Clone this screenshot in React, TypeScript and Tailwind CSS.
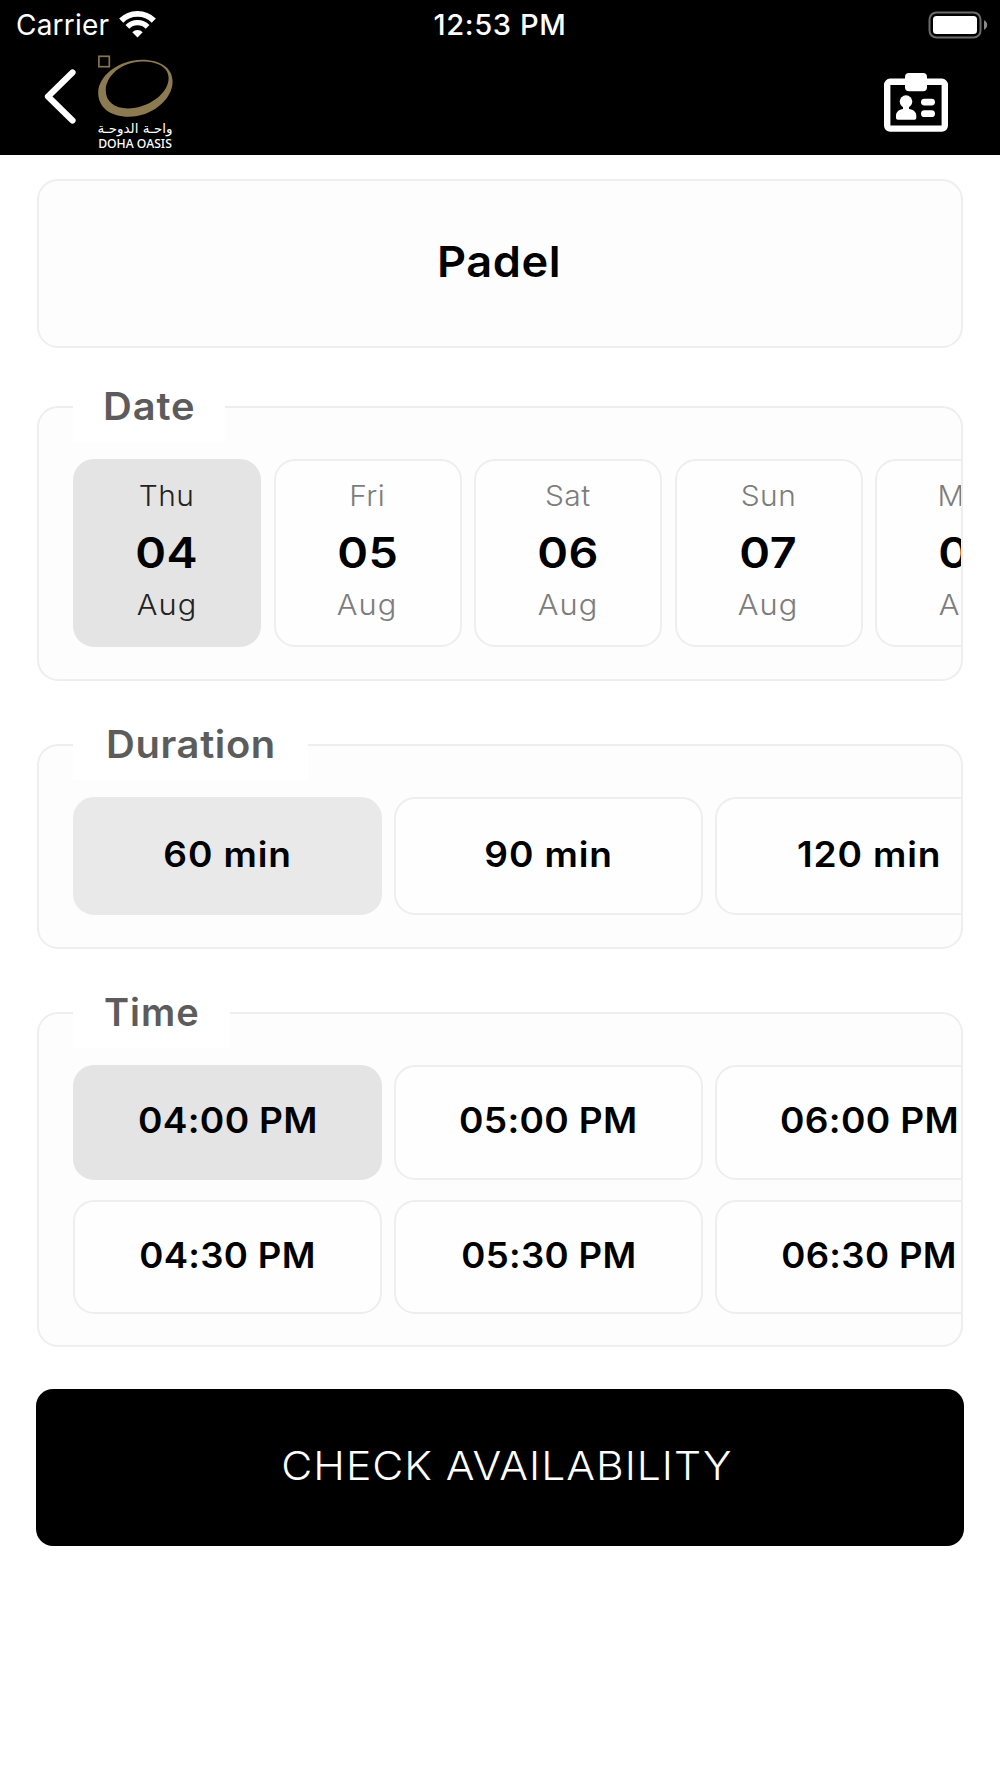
import type { ReactNode } from "react";

const days = [
  { day: "Thu", date: "04" },
  { day: "Fri", date: "05" },
  { day: "Sat", date: "06" },
  { day: "Sun", date: "07" },
  { day: "Mon", date: "08" },
];

const durations = ["60 min", "90 min", "120 min"];

const times = [
  ["04:00 PM", "05:00 PM", "06:00 PM"],
  ["04:30 PM", "05:30 PM", "06:30 PM"],
];

function WifiIcon() {
  return (
    <svg className="mb-[3px] ml-[10px] h-[28px] w-[37px]" viewBox="0 0 37 28" fill="none">
      <path d="M2.200 10.600a23 23 0 0 1 32.600 0" stroke="#fff" strokeWidth="5.800" />
      <path d="M8.400 16.800a14.200 14.200 0 0 1 20.200 0" stroke="#fff" strokeWidth="5.200" />
      <path d="M18.500 27.400l-5.200-5.200a7.400 7.400 0 0 1 10.400 0z" fill="#fff" />
    </svg>
  );
}

function BatteryIcon() {
  return (
    <svg className="mb-[2px] h-[28px] w-[60px]" viewBox="0 0 60 28" fill="none">
      <rect x="1.500" y="1.500" width="51" height="25" rx="7" stroke="#6b6b6b" strokeWidth="2" />
      <rect x="5" y="5" width="44" height="18" rx="3.500" fill="#fff" />
      <path d="M56 9.300c2 .8 3.200 2.600 3.200 4.700s-1.200 3.900-3.200 4.700z" fill="#8a8a8a" />
    </svg>
  );
}

function BackIcon() {
  return (
    <svg className="h-[56px] w-[34px]" viewBox="0 0 34 56" fill="none">
      <path d="M29.500 4.500L5 28.500L29.500 52.500" stroke="#fff" strokeWidth="6.200" strokeLinecap="round" strokeLinejoin="round" />
    </svg>
  );
}

function Logo() {
  return (
    <div className="flex w-[76px] flex-col items-center">
      <svg className="h-[64px] w-[76px]" viewBox="0 0 76 64" fill="none">
        <rect x="1.900" y="2.300" width="10.400" height="10.400" stroke="#85744c" strokeWidth="1.700" />
        <path
          fillRule="evenodd"
          fill="#8c7b51"
          d="M45 5.800C64 5.800 75.600 14.500 75.600 27.500C75.600 46 54 62.800 32 62.800C13 62.800 1.200 53 1.200 39C1.200 21 23 5.800 45 5.800ZM45 7.600C25.500 7.600 8.800 21.500 8.800 36.500C8.800 47.500 17.500 54.400 31 54.400C51 54.400 71.600 39.500 71.600 24.500C71.600 13.500 61 7.600 45 7.600Z"
        />
      </svg>
      <div dir="rtl" className="mt-px h-[18px] font-['DejaVu_Sans','Noto_Sans',sans-serif] text-[13.500px] leading-[18px] whitespace-nowrap text-white">
        واحـة الدوحـة
      </div>
      <div className="h-[14px] font-['Noto_Sans',sans-serif] text-[12.200px] leading-[14px] font-medium whitespace-nowrap text-white">DOHA OASIS</div>
    </div>
  );
}

function BadgeIcon() {
  return (
    <svg className="h-[60px] w-[64px]" viewBox="0 0 64 60" fill="none">
      <rect x="3.200" y="8.800" width="57.600" height="46.800" rx="3" stroke="#fff" strokeWidth="6.400" />
      <rect x="21" y="0" width="22" height="18.200" rx="4" fill="#fff" />
      <circle cx="22" cy="28.600" r="6.300" fill="#fff" />
      <path d="M19 32h6v4c4 .6 7.300 2.600 7.300 6.600v2c0 1.400-.6 2.200-2 2.200H14c-1.400 0-2-.8-2-2.200v-2c0-4 3.300-6 7-6.600z" fill="#fff" />
      <rect x="37" y="25.700" width="14" height="6.800" rx="3.400" fill="#fff" />
      <rect x="37" y="37.300" width="14" height="6.800" rx="3.400" fill="#fff" />
    </svg>
  );
}

function Section({ title, legend, text, height, gap, children }: { title: string; legend: string; text: string; height: string; gap: string; children: ReactNode }) {
  return (
    <section className={`relative mx-px rounded-[21px] border-2 border-[#eeeeee] bg-[#fdfdfd] ${height} ${gap}`}>
      <h2 className={`absolute -top-[37px] left-[34px] h-[71px] bg-white text-[38px] leading-[71px] font-[570] whitespace-nowrap text-[#5c5c5c] ${legend}`}>
        <span className={`inline-block origin-left ${text}`}>{title}</span>
      </h2>
      <div className="h-full overflow-hidden rounded-r-[19px] pt-[51px] pl-[34px]">{children}</div>
    </section>
  );
}

function Tile({ selected, className, children }: { selected?: string; className: string; children: ReactNode }) {
  return (
    <div className={`shrink-0 rounded-[21px] border-2 text-black ${selected ?? "border-[#eeeeee] bg-[#fefefe]"} ${className}`}>
      {children}
    </div>
  );
}

export default function App() {
  return (
    <div className="flex h-[1778px] w-[1000px] flex-col overflow-hidden bg-white font-['Inter',sans-serif]">
      <header className="h-[155px] shrink-0 bg-black text-white">
        <div className="grid h-[51px] grid-cols-3 items-center">
          <div className="flex items-center pl-[16px]">
            <span className="text-[28px] leading-[51px] tracking-[0.2px]">Carrier</span>
            <WifiIcon />
          </div>
          <div className="text-center text-[28px] leading-[51px] font-medium">
            <span className="inline-block scale-x-[1.04] tracking-[0.6px]">12:53 PM</span>
          </div>
          <div className="flex justify-end pr-[12px]">
            <BatteryIcon />
          </div>
        </div>
        <div className="flex items-start justify-between pr-[52px] pl-[43px]">
          <div className="flex items-start">
            <div className="pt-[17px]">
              <BackIcon />
            </div>
            <div className="pt-[3px] pl-[20px]">
              <Logo />
            </div>
          </div>
          <div className="pt-[22px]">
            <BadgeIcon />
          </div>
        </div>
      </header>

      <main className="flex flex-col px-[36px] pt-[24px]">
        <div className="mx-px flex h-[169px] items-center justify-center rounded-[21px] border-2 border-[#eeeeee] bg-[#fdfdfd] pr-[2px] pb-[4px] text-[43px] font-[570] text-black">
          <span className="scale-x-[1.05] tracking-[0.5px]">Padel</span>
        </div>

        <Section title="Date" legend="w-[152px] pl-[29.500px]" text="scale-x-[1.05] tracking-[0.8px]" height="h-[275px]" gap="mt-[58px]">
          <div className="flex gap-[12.500px]">
            {days.map((d, i) => (
              <Tile key={d.date} selected={i === 0 ? "border-[#e4e4e4] bg-[#e4e4e4]" : undefined} className="flex h-[188px] w-[188px] flex-col items-center pt-[14.500px]">
                <div className={`h-[40px] scale-x-[1.05] text-[28.500px] leading-[40px] font-[330] tracking-[0.5px] ${i === 0 ? "text-[#222]" : "text-[#7c7c7c]"}`}>{d.day}</div>
                <div className="mt-[12px] h-[50px] scale-x-[1.100] text-[42.500px] leading-[50px] font-[570] tracking-[0.5px]">{d.date}</div>
                <div className={`mt-[7px] h-[40px] scale-x-[1.080] text-[28.500px] leading-[40px] font-[330] tracking-[1px] ${i === 0 ? "text-[#222]" : "text-[#7c7c7c]"}`}>Aug</div>
              </Tile>
            ))}
          </div>
        </Section>

        <Section title="Duration" legend="w-[235px] pl-[33px]" text="scale-x-[1.05] tracking-[0.600px]" height="h-[205px]" gap="mt-[63px]">
          <div className="flex gap-[12px]">
            {durations.map((d, i) => (
              <Tile key={d} selected={i === 0 ? "border-[#e9e9e9] bg-[#e9e9e9]" : undefined} className="flex h-[118px] w-[309px] items-center justify-center pb-[3px] text-[35px] font-[570]">
                <span className="scale-x-[1.060] tracking-[0.8px]">{d}</span>
              </Tile>
            ))}
          </div>
        </Section>

        <Section title="Time" legend="w-[156.500px] pl-[31px]" text="tracking-[1px]" height="h-[335px]" gap="mt-[63px]">
          <div className="flex flex-col gap-[20px]">
            {times.map((row, r) => (
              <div key={row[0]} className="flex gap-[12px]">
                {row.map((t, i) => (
                  <Tile
                    key={t}
                    selected={r === 0 && i === 0 ? "border-[#e4e4e4] bg-[#e4e4e4]" : undefined}
                    className="flex h-[114.500px] w-[309px] items-center justify-center pb-[4px] text-[35px] font-[570]"
                  >
                    <span className={r === 0 ? "scale-x-[1.060] tracking-[0.3px]" : "scale-x-[1.045] tracking-[0.3px]"}>{t}</span>
                  </Tile>
                ))}
              </div>
            ))}
          </div>
        </Section>

        <button className="mt-[42px] h-[157px] rounded-[17px] bg-black pb-[2px] pl-[13px] text-[39.500px] font-[330] text-white">
          <span className="inline-block scale-x-[1.080] tracking-[0.9px]">CHECK AVAILABILITY</span>
        </button>
      </main>
    </div>
  );
}
